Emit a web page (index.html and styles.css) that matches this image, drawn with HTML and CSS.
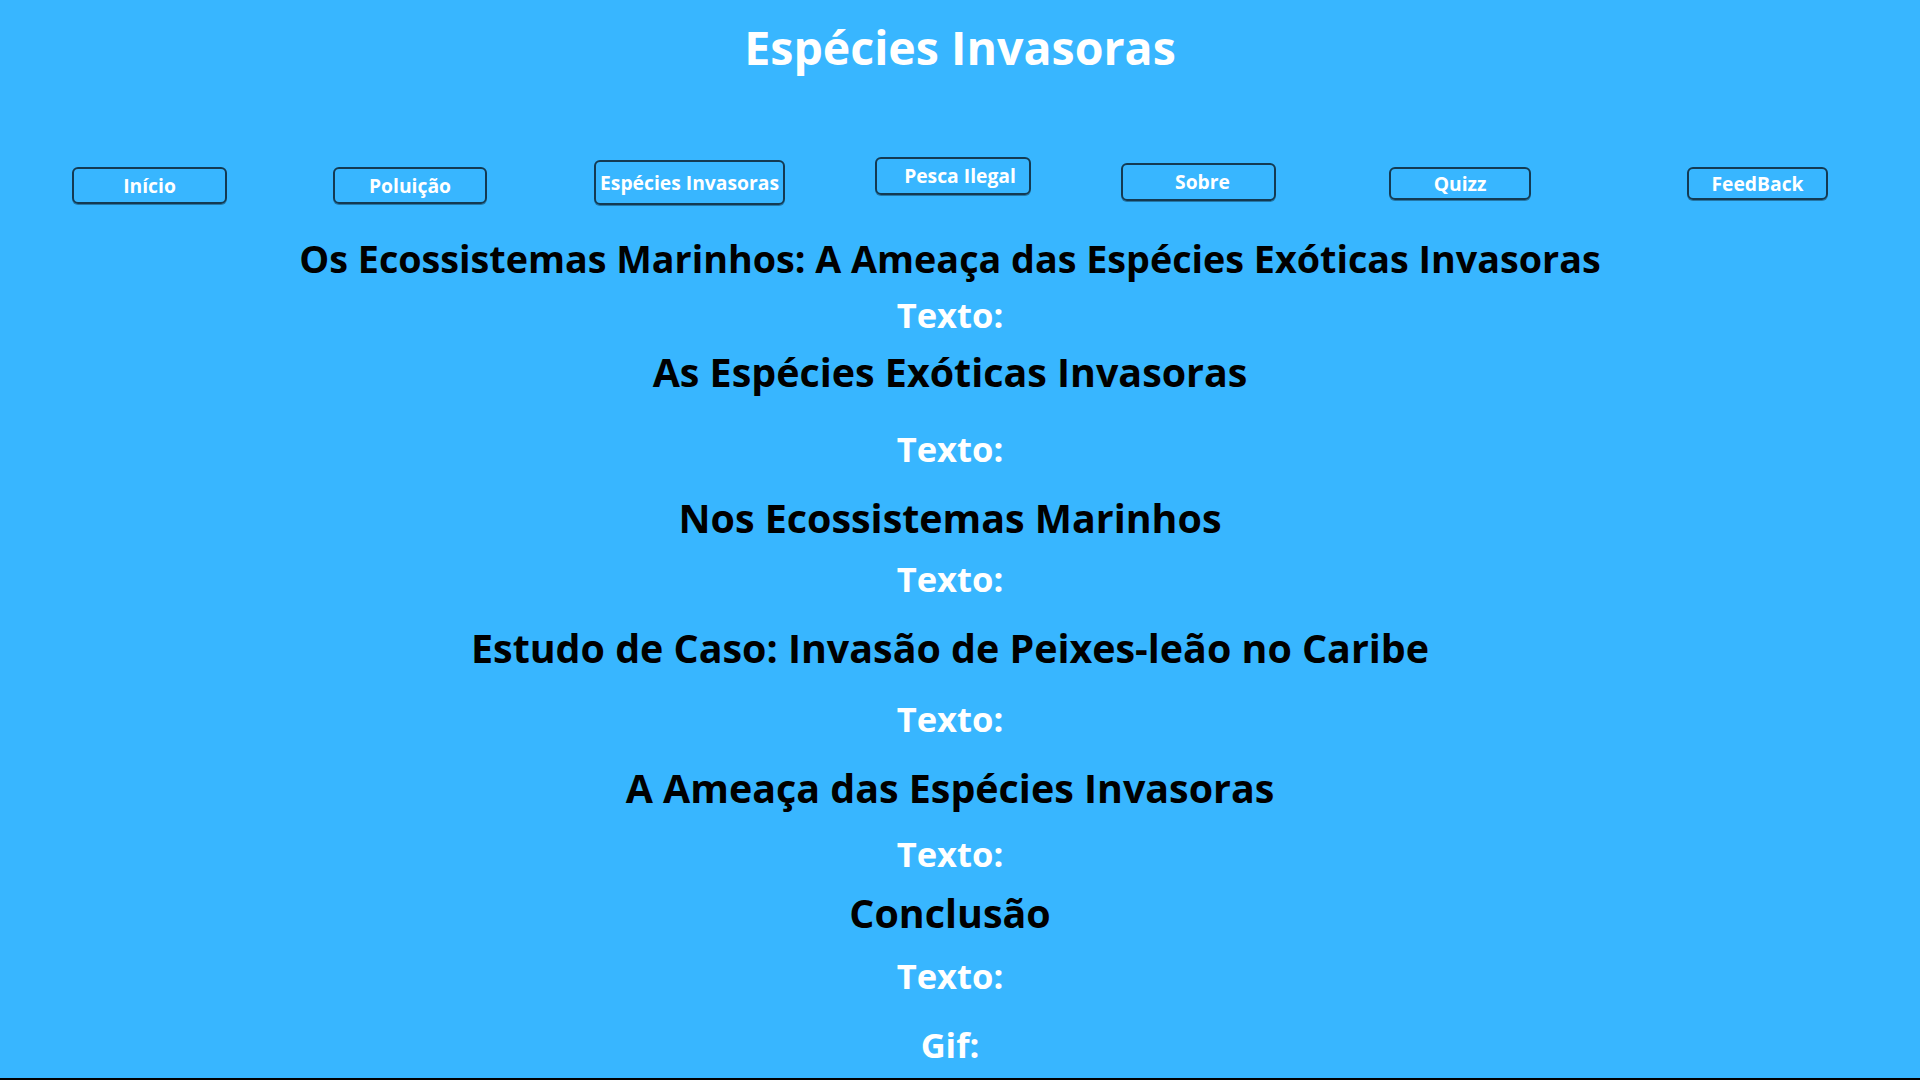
FILE: index.html
```html
<!DOCTYPE html>
<html lang="pt">
<head>
<meta charset="utf-8">
<title>Espécies Invasoras</title>
<link rel="stylesheet" href="styles.css">
</head>
<body>
<header class="header">
  <h1 class="site-title">Espécies Invasoras</h1>
  <nav class="nav">
    <a class="nav-btn nav-inicio" href="#">Início</a>
    <a class="nav-btn nav-poluicao" href="#">Poluição</a>
    <a class="nav-btn nav-especies" href="#">Espécies Invasoras</a>
    <a class="nav-btn nav-pesca" href="#">Pesca Ilegal</a>
    <a class="nav-btn nav-sobre" href="#">Sobre</a>
    <a class="nav-btn nav-quizz" href="#">Quizz</a>
    <a class="nav-btn nav-feedback" href="#">FeedBack</a>
  </nav>
</header>
<main class="content">
  <h2 class="heading heading-lead">Os Ecossistemas Marinhos: A Ameaça das Espécies Exóticas Invasoras</h2>
  <p class="label">Texto:</p>
  <h2 class="heading">As Espécies Exóticas Invasoras</h2>
  <p class="label">Texto:</p>
  <h2 class="heading">Nos Ecossistemas Marinhos</h2>
  <p class="label">Texto:</p>
  <h2 class="heading">Estudo de Caso: Invasão de Peixes-leão no Caribe</h2>
  <p class="label">Texto:</p>
  <h2 class="heading">A Ameaça das Espécies Invasoras</h2>
  <p class="label">Texto:</p>
  <h2 class="heading">Conclusão</h2>
  <p class="label">Texto:</p>
  <p class="label">Gif:</p>
</main>
<div class="page-end"></div>
</body>
</html>
```

FILE: styles.css
```css
html, body {
  margin: 0;
  padding: 0;
}

body {
  background: #38b6ff;
  font-family: "Open Sans", "Noto Sans", sans-serif;
  font-weight: 700;
  height: 1080px;
  overflow: hidden;
  display: flex;
  flex-direction: column;
}

.header {
  padding-top: 20px;
}

.site-title {
  margin: 0;
  text-align: center;
  color: #ffffff;
  font-size: 46.5px;
  line-height: 54px;
  font-weight: 700;
}

.nav {
  display: flex;
  align-items: flex-start;
  margin-top: 83px;
  padding-left: 72px;
  height: 48px;
}

.nav-btn {
  box-sizing: border-box;
  display: flex;
  align-items: center;
  justify-content: center;
  border: 2px solid #143a52;
  border-radius: 6px;
  box-shadow: 0 1px 0 rgba(0, 0, 0, 0.35);
  color: #ffffff;
  text-decoration: none;
  font-size: 19.3px;
  line-height: 1;
  white-space: nowrap;
}

.nav-inicio   { width: 155px; height: 37px; margin-top: 10px; }
.nav-poluicao { width: 154px; height: 37px; margin-top: 10px; margin-left: 106px; }
.nav-especies { width: 191px; height: 45px; margin-top: 3px;  margin-left: 107px; }
.nav-pesca    { width: 156px; height: 38px; margin-top: 0;    margin-left: 90px; padding-left: 14px; }
.nav-sobre    { width: 155px; height: 38px; margin-top: 6px;  margin-left: 90px; padding-left: 8px; }
.nav-quizz    { width: 142px; height: 33px; margin-top: 10px; margin-left: 113px; }
.nav-feedback { width: 141px; height: 33px; margin-top: 10px; margin-left: 156px; }

.content {
  display: flex;
  flex-direction: column;
  align-items: center;
  margin-top: 31px;
  padding-right: 20px;
  flex: 1;
}

.heading,
.label {
  margin: 0;
  text-align: center;
  white-space: nowrap;
}

.heading {
  color: #000000;
  font-size: 39.4px;
  line-height: 48px;
  font-weight: 700;
}

.heading-lead {
  font-size: 37.7px;
  line-height: 46px;
}

.label {
  color: #ffffff;
  font-size: 34.5px;
  line-height: 42px;
}

/* vertical rhythm of the article outline */
.content > :nth-child(2)  { margin-top: 12px; }
.content > :nth-child(3)  { margin-top: 12px; }
.content > :nth-child(4)  { margin-top: 32px; }
.content > :nth-child(5)  { margin-top: 24px; }
.content > :nth-child(6)  { margin-top: 16px; }
.content > :nth-child(7)  { margin-top: 24px; }
.content > :nth-child(8)  { margin-top: 26px; }
.content > :nth-child(9)  { margin-top: 24px; }
.content > :nth-child(10) { margin-top: 21px; }
.content > :nth-child(11) { margin-top: 14px; }
.content > :nth-child(12) { margin-top: 18px; }
.content > :nth-child(13) { margin-top: 27px; }

.page-end {
  height: 2px;
  background: #000000;
}
```
